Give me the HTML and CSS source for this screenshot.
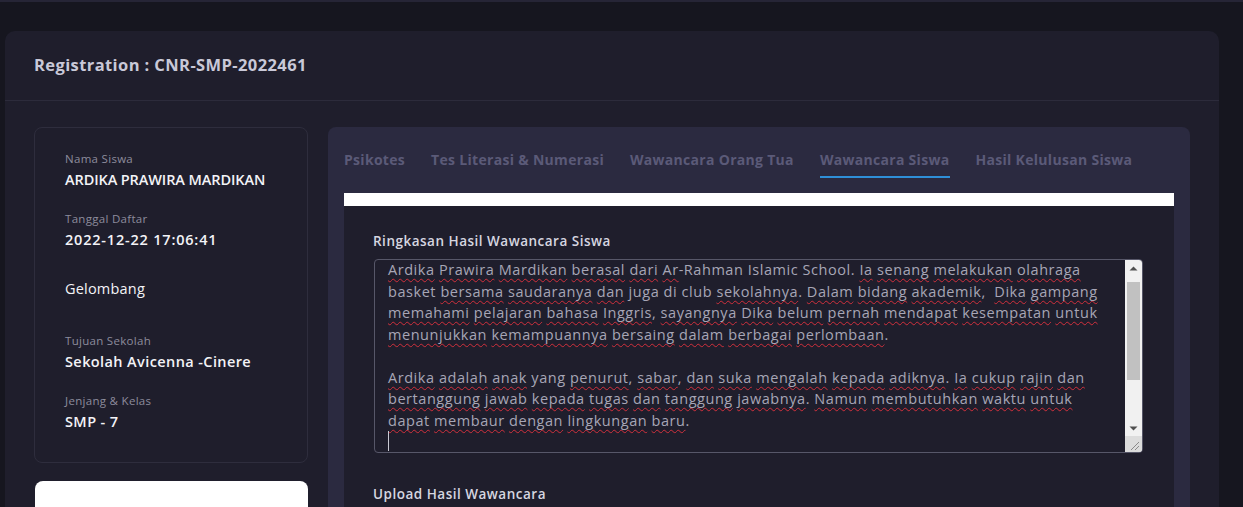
FILE: index.html
```html
<!DOCTYPE html>
<html lang="id">
<head>
<meta charset="utf-8">
<title>Registration : CNR-SMP-2022461</title>
<link rel="stylesheet" href="styles.css">
</head>
<body>
<div class="topline"></div>
<main class="card">
  <header class="card-header">
    <h1 class="card-title">Registration : CNR-SMP-2022461</h1>
  </header>
  <div class="card-body">
    <aside class="side">
      <div class="info">
        <div class="item">
          <div class="label">Nama Siswa</div>
          <div class="value caps">ARDIKA PRAWIRA MARDIKAN</div>
        </div>
        <div class="item">
          <div class="label">Tanggal Daftar</div>
          <div class="value date">2022-12-22 17:06:41</div>
        </div>
        <div class="item item-plain">
          <div class="value">Gelombang</div>
        </div>
        <div class="item">
          <div class="label">Tujuan Sekolah</div>
          <div class="value">Sekolah Avicenna -Cinere</div>
        </div>
        <div class="item">
          <div class="label">Jenjang &amp; Kelas</div>
          <div class="value">SMP - 7</div>
        </div>
      </div>
      <div class="white-card"></div>
    </aside>
    <section class="panel">
      <nav class="tabs">
        <span class="tab">Psikotes</span>
        <span class="tab">Tes Literasi &amp; Numerasi</span>
        <span class="tab">Wawancara Orang Tua</span>
        <span class="tab active">Wawancara Siswa</span>
        <span class="tab">Hasil Kelulusan Siswa</span>
      </nav>
      <div class="white-bar"></div>
      <div class="content">
        <div class="field-label">Ringkasan Hasil Wawancara Siswa</div>
        <div class="textarea">
          <div class="text">
<div class="ln"><span class="sp">Ardika</span> <span class="sp">Prawira</span> <span class="sp">Mardikan</span> <span class="sp">berasal</span> <span class="sp">dari</span> <span class="sp">Ar</span>-Rahman Islamic School. <span class="sp">Ia</span> <span class="sp">senang</span> <span class="sp">melakukan</span> <span class="sp">olahraga</span></div>
<div class="ln">basket <span class="sp">bersama</span> <span class="sp">saudaranya</span> <span class="sp">dan</span> juga di club <span class="sp">sekolahnya</span>. <span class="sp">Dalam</span> <span class="sp">bidang</span> <span class="sp">akademik</span>,  <span class="sp">Dika</span> <span class="sp">gampang</span></div>
<div class="ln"><span class="sp">memahami</span> <span class="sp">pelajaran</span> <span class="sp">bahasa</span> <span class="sp">Inggris</span>, <span class="sp">sayangnya</span> <span class="sp">Dika</span> <span class="sp">belum</span> <span class="sp">pernah</span> <span class="sp">mendapat</span> <span class="sp">kesempatan</span> <span class="sp">untuk</span></div>
<div class="ln"><span class="sp">menunjukkan</span> <span class="sp">kemampuannya</span> <span class="sp">bersaing</span> <span class="sp">dalam</span> <span class="sp">berbagai</span> <span class="sp">perlombaan</span>.</div>
<div class="ln"> </div>
<div class="ln"><span class="sp">Ardika</span> <span class="sp">adalah</span> <span class="sp">anak</span> yang <span class="sp">penurut</span>, <span class="sp">sabar</span>, <span class="sp">dan</span> <span class="sp">suka</span> <span class="sp">mengalah</span> <span class="sp">kepada</span> <span class="sp">adiknya</span>. <span class="sp">Ia</span> <span class="sp">cukup</span> <span class="sp">rajin</span> <span class="sp">dan</span></div>
<div class="ln"><span class="sp">bertanggung</span> <span class="sp">jawab</span> <span class="sp">kepada</span> <span class="sp">tugas</span> <span class="sp">dan</span> <span class="sp">tanggung</span> <span class="sp">jawabnya</span>. <span class="sp">Namun</span> <span class="sp">membutuhkan</span> <span class="sp">waktu</span> <span class="sp">untuk</span></div>
<div class="ln"><span class="sp">dapat</span> <span class="sp">membaur</span> <span class="sp">dengan</span> <span class="sp">lingkungan</span> <span class="sp">baru</span>.</div>
<div class="ln"><span class="caret"></span></div>
          </div>
          <div class="scrollbar">
            <div class="sb-btn">
              <svg width="9" height="5" viewBox="0 0 9 5"><path d="M0.5 4.5 L4.5 0.5 L8.5 4.5 Z" fill="#505050"/></svg>
            </div>
            <div class="sb-track"><div class="sb-thumb"></div></div>
            <div class="sb-btn">
              <svg width="9" height="5" viewBox="0 0 9 5"><path d="M0.5 0.5 L4.5 4.5 L8.5 0.5 Z" fill="#505050"/></svg>
            </div>
            <div class="sb-grip">
              <svg width="16" height="16" viewBox="0 0 16 16"><path d="M14 6 L6 14 M14 10 L10 14" stroke="#8a8a8a" stroke-width="1"/></svg>
            </div>
          </div>
        </div>
        <div class="field-label upload">Upload Hasil Wawancara</div>
      </div>
    </section>
  </div>
</main>
</body>
</html>
```

FILE: styles.css
```css
* { box-sizing: border-box; }
html, body { margin: 0; padding: 0; }
body {
  background: #16161f;
  font-family: "Open Sans", "Liberation Sans", sans-serif;
  height: 507px;
  overflow: hidden;
}
.topline {
  height: 2px;
  background: #262536;
}
.card {
  margin: 29px 24px 0 5px;
  background: #1f1e2c;
  border-radius: 10px 10px 0 0;
  height: 600px;
}
.card-header {
  height: 70px;
  border-bottom: 1px solid #2c2b3b;
  padding-left: 29px;
  padding-bottom: 3px;
  display: flex;
  align-items: center;
}
.card-title {
  margin: 0;
  font-size: 16.5px;
  font-weight: 700;
  color: #c9c9d8;
  letter-spacing: 0.4px;
}
.card-body {
  display: flex;
  gap: 20px;
  padding: 26px 29px 0 29px;
}
.side {
  width: 274px;
  flex: none;
  display: flex;
  flex-direction: column;
  gap: 18px;
}
.info {
  border: 1px solid #2e2d3d;
  border-radius: 8px;
  padding: 23px 6px 29px 30px;
  display: flex;
  flex-direction: column;
  gap: 20px;
}
.item { display: flex; flex-direction: column; }
.label {
  font-size: 11.5px;
  line-height: 16px;
  color: #8d8c9c;
  letter-spacing: 0.3px;
}
.value {
  font-size: 14.5px;
  line-height: 22px;
  font-weight: 600;
  color: #f3f3f7;
  margin-top: 2px;
  letter-spacing: 0.4px;
  white-space: nowrap;
}
.value.caps { letter-spacing: -0.1px; }
.value.date { letter-spacing: 0.8px; }
.item-plain { height: 42px; padding-top: 7px; }
.item-plain .value { font-weight: 500; margin-top: 0; letter-spacing: 0.2px; }
.white-card {
  margin-left: 1px;
  height: 80px;
  background: #ffffff;
  border-radius: 8px;
}
.panel {
  flex: 1;
  background: #2b2a40;
  border-radius: 8px;
  padding: 0 16px;
  height: 420px;
}
.tabs {
  display: flex;
  gap: 26px;
  padding-top: 22px;
}
.tab {
  font-size: 14px;
  font-weight: 700;
  color: #5b5a78;
  line-height: 22px;
  padding-bottom: 5px;
  border-bottom: 2px solid transparent;
  white-space: nowrap;
  letter-spacing: 0.3px;
}
.tab.active {
  border-bottom-color: #2f8fd8;
}
.white-bar {
  margin-top: 15px;
  height: 13px;
  background: #ffffff;
}
.content {
  background: #1f1e2c;
  padding: 25px 31px 0 29px;
  height: 400px;
}
.field-label {
  font-size: 13.5px;
  font-weight: 600;
  color: #d6d6e0;
  line-height: 20px;
  letter-spacing: 0.5px;
}
.textarea {
  position: relative;
  margin-top: 8px;
  margin-left: 1px;
  height: 194px;
  border: 1px solid #575769;
  border-radius: 4px;
  overflow: hidden;
}
.text {
  padding: 0 20px 0 13px;
  margin-top: -1px;
}
.ln {
  white-space: pre;
  font-size: 14.5px;
  line-height: 21.5px;
  color: #a7a6b6;
  height: 21.5px;
  letter-spacing: 0.55px;
}
.sp {
  text-decoration: underline wavy #d1303c;
  text-decoration-thickness: 1px;
  text-underline-offset: 3px;
  text-decoration-skip-ink: none;
}
.caret {
  display: inline-block;
  width: 1px;
  height: 20px;
  background: #c9c9d3;
  vertical-align: top;
}
.scrollbar {
  position: absolute;
  top: 0;
  right: 0;
  bottom: 0;
  width: 17px;
  background: #f1f1f1;
  display: flex;
  flex-direction: column;
}
.sb-btn {
  height: 16px;
  display: flex;
  align-items: center;
  justify-content: center;
}
.sb-track {
  flex: 1;
  padding: 6px 2px 0 2px;
}
.sb-thumb {
  height: 98px;
  background: #c1c1c1;
}
.sb-grip {
  height: 16px;
  background: #dcdcdc;
}
.sb-grip svg { display: block; }
.upload {
  margin-top: 31px;
}
```
